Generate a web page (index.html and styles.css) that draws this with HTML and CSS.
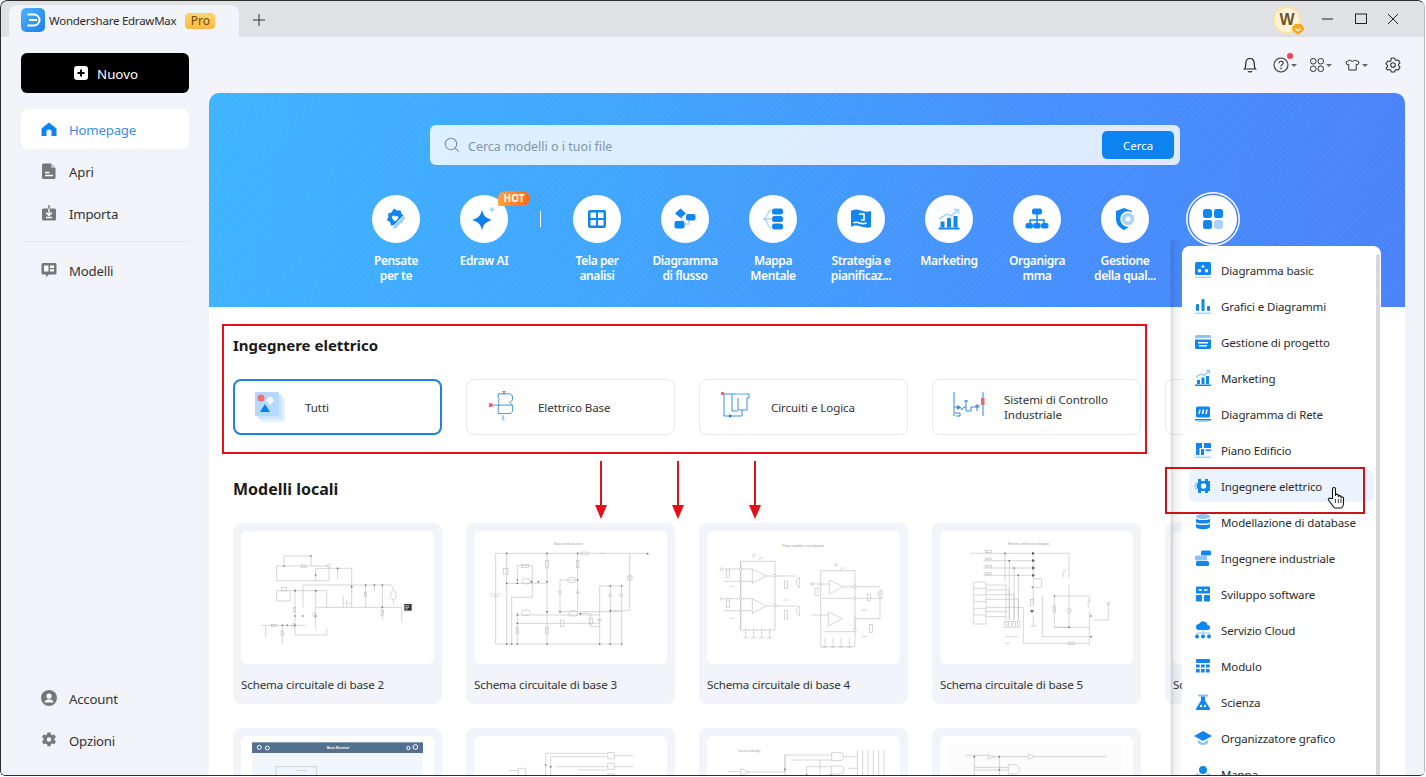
FILE: index.html
```html
<!DOCTYPE html>
<html lang="it">
<head>
<meta charset="utf-8">
<title>Wondershare EdrawMax</title>
<link rel="stylesheet" href="styles.css">
</head>
<body>
<div class="app">
  <header class="titlebar">
    <div class="tab">
      <svg class="logo" viewBox="0 0 24 24"><defs><linearGradient id="lg" x1="0" y1="0" x2="1" y2="1"><stop offset="0" stop-color="#4db4fb"/><stop offset="1" stop-color="#1d7ff0"/></linearGradient></defs><rect width="24" height="24" rx="5" fill="url(#lg)"/><path d="M6.500 6.500h6.500a5.500 5.500 0 0 1 0 11H6.500M8 12h8" fill="none" stroke="#fff" stroke-width="2"/></svg>
      <span class="tab-title">Wondershare EdrawMax</span>
      <span class="pro">Pro</span>
    </div>
    <svg class="newtab" viewBox="0 0 12 12"><path d="M6 0v12M0 6h12" stroke="#333" fill="none"/></svg>
    <div class="title-right">
      <div class="avatar"><span class="avatar-w">W</span><svg class="avatar-badge" viewBox="0 0 12 12"><path d="M3 1h6l3 3.500V7l-6 5-6-5V4.500z" fill="#f6a91f"/><path d="M3.500 5.500 6 8l2.500-2.500" fill="none" stroke="#fff" stroke-width="1.200"/></svg></div>
      <svg class="winbtn win-min" viewBox="0 0 12 12"><path d="M0 6h11" stroke="#222" fill="none"/></svg>
      <svg class="winbtn win-max" viewBox="0 0 12 12"><rect x=".5" y="1" width="11" height="9.500" stroke="#222" fill="none"/></svg>
      <svg class="winbtn win-close" viewBox="0 0 12 12"><path d="M1 1l10 10M11 1 1 11" stroke="#222" fill="none"/></svg>
    </div>
  </header>

  <div class="body">
    <aside class="sidebar">
      <button class="nuovo"><svg class="nuovo-ic" viewBox="0 0 14 14"><rect width="14" height="14" rx="3" fill="#fff"/><path d="M7 3.500v7M3.500 7h7" stroke="#000" stroke-width="2"/></svg>Nuovo</button>
      <nav class="nav nav-top">
        <a class="nav-item active"><svg class="nav-ic" viewBox="0 0 16 16"><path d="M8 1.500 15.500 7.500V15H10.500V11a2.500 2.500 0 0 0-5 0v4H.5V7.500z" fill="#0f84f5"/></svg>Homepage</a>
        <a class="nav-item"><svg class="nav-ic" viewBox="0 0 16 16"><path d="M2.500 .5H10l4.500 4.500v9.500a1.500 1.500 0 0 1-1.500 1.500H2.500A1.500 1.500 0 0 1 1 14.500V2A1.500 1.500 0 0 1 2.500 .5z" fill="#77777b"/><path d="M10 .5V5h4.500z" fill="#bbb"/><path d="M4 9.500h4.500M4 12.500h8" stroke="#fff" stroke-width="1.300"/></svg>Apri</a>
        <a class="nav-item"><svg class="nav-ic" viewBox="0 0 16 16"><path d="M2.500 3.500H13.500A1.500 1.500 0 0 1 15 5v9a1.500 1.500 0 0 1-1.500 1.500h-11A1.500 1.500 0 0 1 1 14V5A1.500 1.500 0 0 1 2.500 3.500z" fill="#77777b"/><path d="M8 3.500v6.500M5 7.500 8 10.500l3-3M5 12.500h6" fill="none" stroke="#fff" stroke-width="1.400"/><path d="M8 0v3.500" stroke="#77777b" stroke-width="1.400"/></svg>Importa</a>
      </nav>
      <hr class="nav-rule">
      <nav class="nav">
        <a class="nav-item"><svg class="nav-ic" viewBox="0 0 16 16"><path d="M2 1h12a1.500 1.500 0 0 1 1.500 1.500V11A1.500 1.500 0 0 1 14 12.500H8L5 15v-2.500H2A1.500 1.500 0 0 1 .5 11V2.500A1.500 1.500 0 0 1 2 1z" fill="#77777b"/><path d="M3 3.500h4.500v6H3zM9 3.500h4v2.500H9zM9 7.300h4v2.200H9z" fill="#fff"/></svg>Modelli</a>
      </nav>
      <nav class="nav nav-bottom">
        <a class="nav-item"><svg class="nav-ic" viewBox="0 0 16 16"><circle cx="8" cy="8" r="8" fill="#77777b"/><circle cx="8" cy="6" r="2.600" fill="#fff"/><path d="M3.500 12.500c.5-2.500 2.500-3.200 4.500-3.200s4 .7 4.500 3.200z" fill="#fff"/></svg>Account</a>
        <a class="nav-item"><svg class="nav-ic" viewBox="0 0 16 16"><path d="M6.500.5h3l.4 2 1.500.8 2-.7 1.500 2.600-1.500 1.300v1.800l1.500 1.300-1.500 2.600-2-.7-1.500.8-.4 2h-3l-.4-2-1.500-.8-2 .7L1 9.600l1.500-1.300V6.500L1 5.200l1.500-2.600 2 .7 1.500-.8z" fill="#77777b"/><circle cx="8" cy="7.500" r="2.300" fill="#f2f4fa"/></svg>Opzioni</a>
      </nav>
    </aside>

    <main class="main">
      <div class="toolbar">
        <svg class="tool tool-bell" viewBox="0 0 14 16"><path d="M1.500 12c1-1 1.300-2 1.300-5.500C2.800 3.500 4.500 1.500 7 1.500s4.200 2 4.200 5c0 3.500.3 4.500 1.300 5.500zM5 14.200c.6 1 3.400 1 4 0" fill="none" stroke="#222" stroke-width="1.200"/></svg>
        <span class="tool-help"><svg class="tool tool-q" viewBox="0 0 16 16"><circle cx="8" cy="8" r="7" fill="none" stroke="#333" stroke-width="1.100"/><path d="M6 6.200c0-2.600 4.200-2.600 4.200-.1 0 1.500-2.200 1.700-2.200 3.300" fill="none" stroke="#333" stroke-width="1.100"/><circle cx="8" cy="11.500" r=".8" fill="#333"/></svg><i class="red-dot"></i><i class="caret"></i></span>
        <span class="tool-group"><svg class="tool tool-apps" viewBox="0 0 14 14"><g fill="none" stroke="#333" stroke-width="1"><rect x=".5" y=".5" width="5.500" height="5.500" rx="2.500"/><rect x="8" y=".5" width="5.500" height="5.500" rx="2.500"/><rect x=".5" y="8" width="5.500" height="5.500" rx="2.500"/><rect x="8" y="8" width="5.500" height="5.500" rx="2.500"/></g></svg><i class="caret"></i></span>
        <span class="tool-group tool-shirt-g"><svg class="tool tool-shirt" viewBox="0 0 18 14"><path d="M6 1 1 3.500l1.500 3.200L4.500 6v7h9V6l2 .7L17 3.500 12 1c-.5 2-5.500 2-6 0z" fill="none" stroke="#333" stroke-width="1.200" stroke-linejoin="round"/></svg><i class="caret"></i></span>
        <svg class="tool tool-gear" viewBox="0 0 16 16"><path d="M6.300 1h3.400l.4 1.800 1.400.8 1.800-.6 1.700 2.900-1.400 1.200v1.800l1.400 1.200-1.700 2.900-1.800-.6-1.400.8-.4 1.800H6.300l-.4-1.800-1.400-.8-1.800.6L1 11.100l1.400-1.200V8.100L1 6.900l1.700-2.900 1.800.6 1.400-.8z" fill="none" stroke="#333" stroke-width="1.100" stroke-linejoin="round"/><circle cx="8" cy="8" r="2.300" fill="none" stroke="#333" stroke-width="1.100"/></svg>
      </div>

      <section class="hero">
        <div class="search">
          <svg class="search-ic" viewBox="0 0 16 16"><circle cx="7" cy="7" r="5.700" fill="none" stroke="#7f8fa3" stroke-width="1.100"/><path d="m11.200 11.200 3.500 3.500" stroke="#7f8fa3" stroke-width="1.100"/></svg>
          <span class="search-ph">Cerca modelli o i tuoi file</span>
          <button class="search-btn">Cerca</button>
        </div>
        <div class="cats">
          <div class="cat"><span class="cat-circle"><svg class="cat-ic" viewBox="0 0 24 24"><path d="M10 1.500l3 2 3.500-.3.800 3.400 2.700 2.200-1.500 3.200.5 3.500-3.400 1-2 2.900-3.200-1.400-3.400.4-1-3.400L2.800 13l1.600-3.100L4 6.400l3.400-.9z" fill="#1185f0"/><path d="M8 9.500c1-1.500 3-1 3.200.3.600-1.300 3-1.200 3 .6 0 1.600-2 3-3.300 3.800C9.700 13.400 7.500 11.500 8 9.500z" fill="#fff"/><path d="M19.500 8.500 22 11 12 21.500l-3.500 1 1-3.500z" fill="#a6c9f3" stroke="#fff" stroke-width=".8"/></svg></span><span class="cat-label">Pensate<br>per te</span></div>
          <div class="cat cat-ai"><span class="cat-circle"><svg class="cat-ic cat-ic-lg" viewBox="0 0 26 26"><path d="M11 3.500c1.200 6 3.500 8.500 10 10.500-6.500 2-8.800 4.500-10 10.500-1.200-6-3.500-8.500-10-10.500 6.500-2 8.800-4.500 10-10.500z" fill="#0f7ff0"/><path d="M21 0c.4 2 1.200 3 3.500 3.500C22.200 4 21.400 5 21 7c-.4-2-1.200-3-3.500-3.500C19.800 3 20.600 2 21 0z" fill="#a9d3fb"/></svg></span><span class="hot">HOT</span><span class="cat-label">Edraw AI</span></div>
          <i class="cat-sep"></i>
          <div class="cat"><span class="cat-circle"><svg class="cat-ic" viewBox="0 0 24 24"><rect x="3" y="3" width="18" height="18" rx="2" fill="#1185f0"/><path d="M5.500 5.500h5.500v5.500H5.500zM13 5.500h5.500v5.500H13zM5.500 13H11v5.500H5.500zM13 13h5.500v5.500H13z" fill="#fff"/></svg></span><span class="cat-label">Tela per<br>analisi</span></div>
          <div class="cat"><span class="cat-circle"><svg class="cat-ic" viewBox="0 0 24 24"><path d="M16 13v4h-5M9 8v6" fill="none" stroke="#a9d3fb" stroke-width="1.500"/><path d="M7.500 1.500 13 6.500 7.500 11 2 6.500z" fill="#1185f0"/><rect x="1.500" y="14" width="10" height="7.500" rx="2" fill="#1185f0"/><rect x="13" y="7" width="9.500" height="6.500" rx="2" fill="#1185f0"/></svg></span><span class="cat-label">Diagramma<br>di flusso</span></div>
          <div class="cat"><span class="cat-circle"><svg class="cat-ic" viewBox="0 0 24 24"><path d="M10 3C6 3 7 12 2 12c5 0 4 9 8 9M3 12h7" fill="none" stroke="#a9d3fb" stroke-width="1.300"/><rect x="11" y="1.500" width="11" height="6" rx="2.500" fill="#1185f0"/><rect x="11" y="9" width="11" height="6" rx="2.500" fill="#1185f0"/><rect x="11" y="16.500" width="11" height="6" rx="2.500" fill="#1185f0"/></svg></span><span class="cat-label">Mappa<br>Mentale</span></div>
          <div class="cat"><span class="cat-circle"><svg class="cat-ic" viewBox="0 0 24 24"><path d="M2 4c3-2 6-2 10-.5 4 1.500 7 1.500 10 .5v16c-3 1-6 1-10-.5-4-1.500-7-1.500-10 .5z" fill="#1185f0"/><path d="M10 7h5v6h-3M4.500 16c2-1.500 4-.8 6 0s4 1 7 0" fill="none" stroke="#fff" stroke-width="1.600"/></svg></span><span class="cat-label">Strategia e<br>pianificaz...</span></div>
          <div class="cat"><span class="cat-circle"><svg class="cat-ic" viewBox="0 0 24 24"><path d="M2 12 10 7l4 2 7-6M17 2.500h4.500V7" fill="none" stroke="#a9d3fb" stroke-width="1.500"/><rect x="3.500" y="14.500" width="4" height="6" fill="#1185f0"/><rect x="10" y="11" width="4" height="9.500" fill="#1185f0"/><rect x="16.500" y="9" width="4" height="11.500" fill="#1185f0"/><rect x="1.500" y="20.500" width="21" height="2" fill="#1185f0"/></svg></span><span class="cat-label">Marketing</span></div>
          <div class="cat"><span class="cat-circle"><svg class="cat-ic" viewBox="0 0 24 24"><path d="M12 7v5M5 16v-3h14v3M12 12v4" fill="none" stroke="#1185f0" stroke-width="1.500"/><rect x="7" y="1.500" width="10" height="6" rx="2" fill="#1185f0"/><rect x=".5" y="16" width="7.500" height="5.500" rx="2" fill="#1185f0"/><rect x="8.200" y="16" width="7.500" height="5.500" rx="2" fill="#1185f0"/><rect x="16" y="16" width="7.500" height="5.500" rx="2" fill="#1185f0"/></svg></span><span class="cat-label">Organigra<br>mma</span></div>
          <div class="cat"><span class="cat-circle"><svg class="cat-ic" viewBox="0 0 24 24"><path d="M3 4 11 1l8 3v8c0 6-4 9-8 11-4-2-8-5-8-11z" fill="#1185f0"/><circle cx="15" cy="12" r="7" fill="#a9d3fb" stroke="#fff" stroke-width="1.500"/><circle cx="15" cy="12" r="2.500" fill="#fff"/></svg></span><span class="cat-label">Gestione<br>della qual...</span></div>
          <div class="cat cat-sel"><span class="cat-circle"><svg class="cat-ic" viewBox="0 0 24 24"><rect x="2" y="2" width="9" height="9" rx="2.500" fill="#1185f0"/><rect x="13" y="2" width="9" height="9" rx="2.500" fill="#1185f0"/><rect x="2" y="13" width="9" height="9" rx="2.500" fill="#1185f0"/><rect x="13" y="13" width="9" height="9" rx="2.500" fill="#a9d3fb"/></svg></span></div>
        </div>
      </section>

      <section class="content">
        <h2 class="h-first">Ingegnere elettrico</h2>
        <div class="subcats">
          <div class="sub sub-on"><svg class="sub-ic" viewBox="0 0 32 32"><rect x="7" y="7" width="24" height="24" rx="1" fill="#e3f0fd"/><rect x="4" y="4" width="24" height="24" rx="1" fill="#cfe5fb"/><rect x="1" y="1" width="24" height="24" rx="1" fill="#b5d8fb"/><circle cx="7" cy="7" r="3.500" fill="#f0716e"/><path d="m16 5 4.500 4.500-4.500 4.500-4.500-4.500z" fill="#eef6fe"/><path d="m11 13 5 8H6z" fill="#0f7ff0"/></svg><span>Tutti</span></div>
          <div class="sub"><svg class="sub-ic" viewBox="0 0 32 34"><g fill="none" stroke="#3f8fe0" stroke-width="1"><path d="M11 3h12l3 2v5l-3 2 3 3v7l-2 2H11V15l1-1.500-1-1.500 1-3-1-2z"/><path d="M5 15h21M17 2v2M16 26v5"/></g><path d="M15 0h4l-2 3z" fill="#e86a70"/><rect x="1" y="13" width="4" height="4" fill="#e86a70"/><path d="M14 30h5l-2.500 2z" fill="#a9d3fb"/></svg><span>Elettrico Base</span></div>
          <div class="sub"><svg class="sub-ic" viewBox="0 0 32 32"><g fill="none" stroke="#3f8fe0" stroke-width="1"><path d="M4 3h25v4h-2v12H18v-12"/><path d="M4 3v22h18V19"/><path d="M12 3v17h6M10 25h2"/></g><rect x="1" y="1" width="3" height="3" fill="#e86a70"/><path d="m9 23 3 2-3 2z" fill="#1f7fe0"/><path d="M16 2h10v2H16z" fill="#a9d3fb"/></svg><span>Circuiti e Logica</span></div>
          <div class="sub"><svg class="sub-ic" viewBox="0 0 32 32"><g fill="none" stroke="#2f86e0" stroke-width="1"><path d="M1 1v24M30 1v24M1 16h6l2 3 2-3h2v4h5v-4h8"/><path d="M13 9v7M11 10h4M24 13v7M22 15h5M2 22h5v3H3"/></g><rect x="28" y="7" width="3.500" height="7" fill="#e86a70"/><path d="M4 14v5l4-2.500z" fill="#2f86e0"/></svg><span>Sistemi di Controllo<br>Industriale</span></div>
          <div class="sub"></div>
        </div>

        <h2 class="h-second">Modelli locali</h2>
        <div class="tpls">
          <article class="tpl"><div class="thumb"><svg viewBox="48 33 579 399" class="diag"><g class="w"><path d="M177 108H258V138M177 108V138M155 138H312M155 138V182H312V145M272 145H380V195M272 145V182M234 262V195H500M155 212H305V262M155 212V243H195V212M210 212V345H305V325M272 212V328M380 195V262M422 195V262M448 195V215M472 195V300M275 262H530V305M110 316H240M172 316V375M122 316V352M338 145V178M365 240V262M355 228V262"/><rect x="170" y="202" width="14" height="11"/><rect x="205" y="262" width="7" height="14"/><rect x="229" y="135" width="14" height="7"/><rect x="168" y="333" width="7" height="14"/><rect x="418" y="216" width="7" height="14"/><rect x="468" y="272" width="7" height="14"/><rect x="140" y="313" width="14" height="6"/><path d="M305 137l7-6 7 6-7 7zM260 284l10 8v-16zM198 316l10 8v-16zM366 250h14"/><ellipse cx="505" cy="225" rx="8" ry="14"/><path d="M500 197 505 211M505 239V255"/></g><g class="d"><circle cx="258" cy="108" r="2.500"/><circle cx="177" cy="138" r="2.500"/><circle cx="272" cy="165" r="2.500"/><circle cx="210" cy="212" r="2.500"/><circle cx="272" cy="212" r="2.500"/><circle cx="380" cy="200" r="2.500"/><circle cx="422" cy="195" r="2.500"/><circle cx="448" cy="195" r="2.500"/><circle cx="472" cy="195" r="2.500"/><circle cx="472" cy="262" r="2.500"/><circle cx="210" cy="288" r="2.500"/><circle cx="234" cy="288" r="2.500"/><circle cx="272" cy="288" r="2.500"/><circle cx="172" cy="316" r="2.500"/><circle cx="187" cy="316" r="2.500"/><circle cx="210" cy="316" r="2.500"/><circle cx="338" cy="145" r="2.500"/></g><rect x="538" y="252" width="22" height="20" fill="#333"/><path d="M541 257h12M541 262h12M541 267h8" stroke="#fff" stroke-width="2"/></svg></div><p class="tpl-name">Schema circuitale di base 2</p></article>

          <article class="tpl"><div class="thumb"><svg viewBox="747 33 579 399" class="diag"><text x="1030" y="76" class="dt">Basic overload circuit</text><g class="w"><path d="M812 100H1268M812 100V372H1190M845 100V372M860 230V372M860 232H922V137H877V190M845 190H965M966 100V372M1058 100V270M1005 180V275H1190M877 275V372M877 285H1125M877 310H1125M1005 180H1055M1124 198V372M1124 198H1190V372M1156 198V372M1156 272H1214V100M1097 280V320H1124M1066 280H1097"/><rect x="835" y="146" width="14" height="16"/><rect x="890" y="134" width="20" height="8"/><rect x="962" y="122" width="8" height="22"/><rect x="1054" y="122" width="8" height="20"/><rect x="1068" y="96" width="24" height="9" rx="4"/><rect x="892" y="176" width="24" height="16" rx="7"/><rect x="1028" y="172" width="24" height="16" rx="7"/><rect x="890" y="270" width="26" height="16" rx="7"/><rect x="1032" y="272" width="26" height="16" rx="7"/><rect x="1006" y="300" width="11" height="20"/><rect x="1092" y="294" width="10" height="18"/><rect x="962" y="322" width="8" height="18"/><rect x="873" y="322" width="8" height="18"/><circle cx="1214" cy="174" r="8"/><path d="M1209 169l10 10M1219 169l-10 10M795 222h34M802 229h20M1128 100h10M1000 215h10l-5 8zM1053 220h10l-5-8zM1150 228h12l-6-8zM1182 228h12l-6-8zM1118 298h12l-6 8z"/></g><g class="d"><circle cx="845" cy="100" r="2.500"/><circle cx="966" cy="100" r="2.500"/><circle cx="1058" cy="100" r="2.500"/><circle cx="1268" cy="101" r="2.500"/><circle cx="877" cy="180" r="2.500"/><circle cx="877" cy="190" r="2.500"/><circle cx="845" cy="190" r="2.500"/><circle cx="920" cy="185" r="2.500"/><circle cx="940" cy="185" r="2.500"/><circle cx="966" cy="185" r="2.500"/><circle cx="966" cy="275" r="2.500"/><circle cx="1005" cy="275" r="2.500"/><circle cx="1058" cy="180" r="2.500"/><circle cx="1156" cy="198" r="2.500"/><circle cx="1190" cy="198" r="2.500"/><circle cx="1156" cy="272" r="2.500"/><circle cx="877" cy="285" r="2.500"/><circle cx="877" cy="310" r="2.500"/><circle cx="1066" cy="281" r="2.500"/><circle cx="845" cy="372" r="2.500"/><circle cx="860" cy="372" r="2.500"/><circle cx="877" cy="372" r="2.500"/><circle cx="966" cy="372" r="2.500"/><circle cx="1124" cy="372" r="2.500"/><circle cx="1156" cy="372" r="2.500"/><circle cx="1190" cy="372" r="2.500"/></g></svg></div><p class="tpl-name">Schema circuitale di base 3</p></article>

          <article class="tpl"><div class="thumb"><svg viewBox="51 33 579 399" class="diag"><text x="340" y="80" class="dt">Power amplifier circuit diagram</text><g class="w"><path d="M187 147V190L228 168zM187 236V280L228 258zM418 180V222L460 200zM415 276V318L458 296z"/><path d="M152 124H255V330H152zM152 124V330M100 147H187M100 184H187M100 236H187M100 272H187M228 168H320M228 258H320M392 152H495V380H392zM365 192H418M365 285H415M395 235H495M400 335H495V296M460 200H570M495 235H572M495 296H570V210"/><circle cx="94" cy="147" r="4"/><circle cx="94" cy="236" r="4"/><circle cx="366" cy="192" r="4"/><circle cx="191" cy="106" r="4"/><circle cx="438" cy="135" r="4"/><rect x="110" y="150" width="8" height="22"/><rect x="110" y="240" width="8" height="22"/><rect x="284" y="183" width="9" height="22"/><rect x="284" y="272" width="9" height="25"/><rect x="375" y="204" width="9" height="22"/><rect x="532" y="222" width="9" height="20"/><rect x="538" y="314" width="9" height="24"/><path d="M320 180l8-8v32l-8-8zM320 266l8-8v30l-8-8zM564 218l12-8v26l-12-8zM167 325v28M191 325v28M215 325v28M239 325v28M405 355v25M429 355v25M453 355v25M478 355v25M160 353h14M184 353h14M208 353h14M232 353h14M398 382h14M422 382h14M446 382h14M471 382h14M118 200h12M118 295h12M280 240h16M515 270h16M515 350h16M205 120c5-8 8-8 15-4M450 150c5-8 8-8 15-4"/></g><g class="d light"><circle cx="152" cy="147" r="4"/><circle cx="152" cy="184" r="4"/><circle cx="152" cy="236" r="4"/><circle cx="152" cy="272" r="4"/><circle cx="255" cy="167" r="4"/><circle cx="255" cy="256" r="4"/><circle cx="392" cy="192" r="4"/><circle cx="495" cy="200" r="4"/><circle cx="495" cy="235" r="4"/><circle cx="495" cy="296" r="4"/><circle cx="495" cy="332" r="4"/></g></svg></div><p class="tpl-name">Schema circuitale di base 4</p></article>

          <article class="tpl"><div class="thumb"><svg viewBox="750 33 579 399" class="diag"><text x="1016" y="74" class="dt">Remote control circuit diagram</text><g class="w"><path d="M840 100H1030M880 122H1030M880 144H1030M880 166H1030M1040 100H1137V175M1030 100V202M1030 176H1055V202H1030M1137 195V322H1093V228H1198V245M1198 275V375M1093 322H1198M1030 202V252M1030 285V318M1020 318h20M851 186H888V312H851zM888 195H948V300M888 210H958V300M888 224H972V300M888 238H985V300M888 262H1000V370H1198M888 275H950M888 290H950M945 100V185M958 122V300M972 144V300M985 166V300M1057 350H1198M1057 228V350M1210 300H1255V250M945 350h40M945 370h15"/><rect x="886" y="92" width="18" height="5"/><rect x="886" y="114" width="18" height="5"/><rect x="886" y="136" width="18" height="5"/><rect x="886" y="158" width="18" height="5"/><rect x="943" y="305" width="8" height="18"/><rect x="956" y="305" width="8" height="18"/><rect x="969" y="305" width="8" height="18"/><rect x="982" y="305" width="8" height="18"/><rect x="1089" y="258" width="8" height="18"/><rect x="1021" y="238" width="9" height="18"/><rect x="1136" y="366" width="18" height="7"/><ellipse cx="1137" cy="272" rx="7" ry="6"/><path d="M1120 148c8 2 8 6 0 8s8 6 0 8 8 6 0 8M1195 240c8 2 8 6 0 8s8 6 0 8 8 6 0 8M1250 248h10l-5 8zM852 205h36M852 225h36M852 245h36M852 265h36M852 285h36"/></g><g class="d"><path d="M1026 95l10 5-10 5zM1026 117l10 5-10 5zM1026 139l10 5-10 5zM1026 161l10 5-10 5zM1020 270h12l-6 10z"/><circle cx="945" cy="100" r="2.500"/><circle cx="958" cy="122" r="2.500"/><circle cx="972" cy="144" r="2.500"/><circle cx="985" cy="166" r="2.500"/><circle cx="1027" cy="202" r="2.500"/><circle cx="1093" cy="228" r="2.500"/><circle cx="1137" cy="322" r="2.500"/><circle cx="1203" cy="350" r="2.500"/><circle cx="1203" cy="288" r="2.500"/></g></svg></div><p class="tpl-name">Schema circuitale di base 5</p></article>

          <article class="tpl"><div class="thumb"></div><p class="tpl-name">Schema circuitale di base 6</p></article>

          <article class="tpl"><div class="thumb"><svg viewBox="48 648 579 399" class="diag"><rect x="81" y="667" width="513" height="32" fill="#54708f"/><rect x="81" y="699" width="513" height="120" fill="#f1f6fb"/><text x="339" y="687" class="dt dt-w">Basic Electrical</text><g fill="none" stroke="#fff" stroke-width="3"><circle cx="103" cy="682" r="6"/><circle cx="127" cy="684" r="6"/><circle cx="550" cy="684" r="5"/><circle cx="571" cy="681" r="7"/></g><g class="w"><path d="M153 740H275V770M153 740V775M215 752h30"/></g></svg></div></article>

          <article class="tpl"><div class="thumb"><svg viewBox="747 648 579 399" class="diag"><g class="w"><path d="M962 700V775M962 700H1145M977 710H1145M977 710V775M992 740H1145M1060 750H1145M1168 707H1225M1168 740H1225M1148 698h20v18h-20zM1148 730h20v18h-20zM1148 762h20v18h-20zM880 745h22v22h-22zM850 752h30"/></g><g class="d"><circle cx="962" cy="735" r="2.500"/><circle cx="977" cy="740" r="2.500"/></g></svg></div></article>

          <article class="tpl"><div class="thumb"><svg viewBox="51 648 579 399" class="diag"><text x="178" y="695" class="dt">Circuits and logic</text><g class="w"><path d="M152 745v22l24-11zM115 755h37M176 756H285V705H425M285 705V770M305 720H425M350 740H425M350 740V770M390 720V770M425 698h25a12 12 0 0 1 0 24h-25zM425 738h25a12 12 0 0 1 0 24h-25zM462 710h40M475 745h30M502 690v90M518 690v90M534 690v90M550 690v90M566 690v90M582 690v90"/></g><g class="d"><circle cx="285" cy="748" r="2.500"/><circle cx="350" cy="765" r="2.500"/><circle cx="422" cy="765" r="2.500"/></g></svg></div></article>

          <article class="tpl"><div class="thumb"><svg viewBox="750 648 579 399" class="diag"><rect x="780" y="668" width="515" height="120" fill="#fcfcfc"/><g class="w"><path d="M825 706H895L915 710 895 717V702M915 710H1015M1015 702l22 8-22 8zM1037 710H1250M853 710V780M853 742H955M853 750H955M928 710V770M955 734h20a14 14 0 0 1 0 28h-20z"/></g><g class="d"><circle cx="853" cy="710" r="2.500"/><circle cx="928" cy="710" r="2.500"/><circle cx="928" cy="750" r="2.500"/></g></svg></div></article>
        </div>
      </section>
    </main>
  </div>

  <div class="menu">
    <div class="menu-bar"></div>
    <div class="menu-item"><svg viewBox="0 0 18 18"><rect x="1" y="1" width="16" height="13" rx="1.500" fill="#1185f0"/><path d="M9 3.500l2 3H7z M5.500 8a1.700 1.700 0 1 0 .01 0zM12.500 8a1.700 1.700 0 1 0 .01 0z" fill="#fff"/><rect x="1" y="15.500" width="16" height="1.500" fill="#a9d3fb"/></svg>Diagramma basic</div>
    <div class="menu-item"><svg viewBox="0 0 18 18"><rect x="2" y="7" width="3" height="7" rx="1" fill="#1185f0"/><rect x="7.500" y="2" width="3" height="12" rx="1" fill="#1185f0"/><rect x="13" y="9" width="3" height="5" rx="1" fill="#1185f0"/><rect x="1" y="15.500" width="16" height="1.500" fill="#a9d3fb"/></svg>Grafici e Diagrammi</div>
    <div class="menu-item"><svg viewBox="0 0 18 18"><path d="M2.500 2h13A1.500 1.500 0 0 1 17 3.500V5H1V3.500A1.500 1.500 0 0 1 2.500 2z" fill="#8cc4fa"/><path d="M1 6.500h16v8a1.500 1.500 0 0 1-1.500 1.500h-13A1.500 1.500 0 0 1 1 14.500z" fill="#1185f0"/><rect x="4" y="9" width="10" height="1.500" fill="#fff"/><rect x="5" y="12" width="8" height="1.500" fill="#fff"/></svg>Gestione di progetto</div>
    <div class="menu-item"><svg viewBox="0 0 18 18"><path d="M2 8 7 5l3 1.500L15 2M12 1.500h3.500V5" fill="none" stroke="#8cc4fa" stroke-width="1.200"/><rect x="3" y="11" width="3" height="4" fill="#1185f0"/><rect x="7.500" y="8.500" width="3" height="6.500" fill="#1185f0"/><rect x="12" y="7" width="3" height="8" fill="#1185f0"/><rect x="1" y="15.500" width="16" height="1.500" fill="#1185f0"/></svg>Marketing</div>
    <div class="menu-item"><svg viewBox="0 0 18 18"><rect x="2" y="1.500" width="14" height="11" rx="1.500" fill="#1185f0"/><path d="M6 4.500 5 9M9.500 4.500 8.500 9M13 4.500 12 9" stroke="#fff" stroke-width="1.500"/><rect x="1" y="14" width="16" height="1.500" fill="#1185f0"/><rect x="4" y="16" width="10" height="1" fill="#a9d3fb"/></svg>Diagramma di Rete</div>
    <div class="menu-item"><svg viewBox="0 0 18 18"><path d="M2 2h6v5H5.500v7H2z" fill="#1185f0"/><path d="M7 8h3v6H7z" fill="#1185f0"/><rect x="10" y="2" width="7" height="5" rx=".5" fill="#1185f0"/><rect x="11.500" y="8.500" width="5.500" height="1.500" fill="#1185f0"/><rect x="1" y="15.500" width="16" height="1.500" fill="#a9d3fb"/></svg>Piano Edificio</div>
    <div class="menu-item menu-on"><svg viewBox="0 0 18 18"><path d="M4 2h3v2h4V2h3v2h2v10h-2v2h-3v-2H7v2H4v-4.500H3v-5h1z" fill="#1185f0"/><circle cx="9.500" cy="9" r="2.700" fill="#fff"/><path d="M0 9h3M1 6.500h2M1 11.500h2" stroke="#8cc4fa" stroke-width="1.300"/></svg>Ingegnere elettrico</div>
    <div class="menu-item"><svg viewBox="0 0 18 18"><ellipse cx="9" cy="3.500" rx="7" ry="2.500" fill="#8cc4fa"/><path d="M2 5.500c1 2 13 2 14 0V9c-1 2-13 2-14 0zM2 10.500c1 2 13 2 14 0V14c-1 3-13 3-14 0z" fill="#1185f0"/></svg>Modellazione di database</div>
    <div class="menu-item"><svg viewBox="0 0 18 18"><rect x="7" y="1.500" width="10" height="5" rx="1.500" fill="#1185f0"/><rect x="1" y="6.500" width="12" height="5" rx="1.500" fill="#8cc4fa"/><rect x="2" y="12" width="13" height="5" rx="1.500" fill="#1185f0"/></svg>Ingegnere industriale</div>
    <div class="menu-item"><svg viewBox="0 0 18 18"><rect x="2" y="1.500" width="14" height="7" rx="1" fill="#1185f0"/><path d="M4.500 5h3.500M10 5h3.500" stroke="#fff" stroke-width="1.300"/><rect x="2" y="10" width="6" height="6.500" rx="1" fill="#1185f0"/><rect x="10" y="10" width="6" height="6.500" rx="1" fill="#1185f0"/></svg>Sviluppo software</div>
    <div class="menu-item"><svg viewBox="0 0 18 18"><path d="M5 9a3 3 0 0 1 0-6 4.500 4.500 0 0 1 8.500 1A2.500 2.500 0 0 1 13.500 9z" fill="#1185f0"/><path d="M9 9v3M3 14v-2h12v2M9 12v2" fill="none" stroke="#8cc4fa" stroke-width="1"/><circle cx="3" cy="15.500" r="2" fill="#1185f0"/><circle cx="9" cy="15.500" r="2" fill="#1185f0"/><circle cx="15" cy="15.500" r="2" fill="#1185f0"/></svg>Servizio Cloud</div>
    <div class="menu-item"><svg viewBox="0 0 18 18"><rect x="2" y="2" width="14" height="4" rx="1" fill="#1185f0"/><g fill="#1185f0"><rect x="2" y="7.500" width="3.700" height="3"/><rect x="7" y="7.500" width="3.700" height="3"/><rect x="12" y="7.500" width="3.700" height="3"/><rect x="2" y="12" width="3.700" height="3.500"/><rect x="7" y="12" width="3.700" height="3.500"/><rect x="12" y="12" width="3.700" height="3.500"/></g></svg>Modulo</div>
    <div class="menu-item"><svg viewBox="0 0 18 18"><rect x="4" y="1.500" width="10" height="2" fill="#8cc4fa"/><path d="M7 3.500h4v4l5 8a1 1 0 0 1-1 1.500H3a1 1 0 0 1-1-1.500l5-8z" fill="#1185f0"/><circle cx="7" cy="13" r="1.200" fill="#fff"/><circle cx="11" cy="13" r="1.200" fill="#fff"/></svg>Scienza</div>
    <div class="menu-item"><svg viewBox="0 0 18 18"><path d="M9 2 18 7 9 12 0 7z" fill="#1185f0"/><path d="M4 11v3c2 2.500 8 2.500 10 0v-3L9 14z" fill="#8cc4fa"/></svg>Organizzatore grafico</div>
    <div class="menu-item"><svg viewBox="0 0 18 18"><circle cx="9" cy="5" r="4" fill="#1185f0"/><circle cx="3.500" cy="11" r="2.500" fill="#8cc4fa"/><circle cx="14.500" cy="11" r="2.500" fill="#8cc4fa"/><path d="M1 16h16v2H1z" fill="#1185f0"/></svg>Mappa</div>
  </div>

  <div class="note-box note-box-cat"></div>
  <div class="note-box note-box-menu"></div>
  <svg class="note-arrow note-a1" viewBox="0 0 14 58"><path d="M7 0v46" stroke="#e2121a" stroke-width="2"/><path d="M1 44h12L7 58z" fill="#e2121a"/></svg>
  <svg class="note-arrow note-a2" viewBox="0 0 14 58"><path d="M7 0v46" stroke="#e2121a" stroke-width="2"/><path d="M1 44h12L7 58z" fill="#e2121a"/></svg>
  <svg class="note-arrow note-a3" viewBox="0 0 14 58"><path d="M7 0v46" stroke="#e2121a" stroke-width="2"/><path d="M1 44h12L7 58z" fill="#e2121a"/></svg>
  <svg class="hand" viewBox="0 0 18 23"><path d="M5.500 12.500V3a1.500 1.500 0 0 1 3 0v6.500a1.400 1.400 0 0 1 2.800 0v1a1.400 1.400 0 0 1 2.700.3v1a1.300 1.300 0 0 1 2.500.5V17c0 3-1.500 5-3 5H8.500c-1.500 0-2.200-1-3-2.500L1.500 14c-.8-1.300.8-2.600 2-1.500z" fill="#fff" stroke="#111" stroke-width="1.100" stroke-linejoin="round"/><path d="M8.500 13v4M11.300 13v4M14 13v4" stroke="#111" stroke-width=".8"/></svg>
</div>
</body>
</html>
```

FILE: styles.css
```css
* { box-sizing: border-box; }
html, body { margin: 0; padding: 0; background: #fff; overflow: hidden; }
body { font-family: "Noto Sans", "Open Sans", sans-serif; font-size: 12px; color: #222; }

.app { position: relative; width: 1425px; height: 776px; background: #f2f4fa; border-radius: 7px 7px 5px 5px; overflow: hidden; display: flex; flex-direction: column; }
.app::after { content: ""; position: absolute; inset: 0; border: 1px solid #2e2e2e; border-right-color: #bdbdbd; border-radius: inherit; pointer-events: none; }

/* title bar */
.titlebar { flex: 0 0 37px; background: #dfe1e5; display: flex; align-items: flex-end; position: relative; }
.tab { width: 230px; height: 32px; margin-left: 9px; background: #f2f4fa; border-radius: 8px 8px 0 0; display: flex; align-items: center; padding-left: 12px; padding-bottom: 1px; }
.logo { width: 24px; height: 24px; flex: none; margin-top: -2px; }
.tab-title { margin-left: 4px; font-size: 11.500px; color: #2b2b2b; letter-spacing: -.25px; white-space: nowrap; }
.pro { margin-left: 9px; width: 30px; height: 16px; background: linear-gradient(#ffd572, #fbb83f); border-radius: 4px; color: #6b4a10; font-size: 12px; line-height: 16px; text-align: center; }
.newtab { width: 12px; height: 12px; margin: 0 0 11px 14px; }
.title-right { position: absolute; right: 0; top: 0; height: 37px; }
.avatar { position: absolute; top: 6px; width: 28px; height: 28px; right: 124px; border-radius: 50%; background: #fff3da; border: 2px solid #fbe3a6; display: flex; align-items: center; justify-content: center; }
.avatar-w { font-family: "Liberation Sans", sans-serif; font-weight: 700; font-size: 16px; color: #6d5327; }
.avatar-badge { position: absolute; right: -5px; bottom: -3px; width: 12px; height: 12px; }
.winbtn { position: absolute; width: 12px; height: 12px; }
.win-min { right: 91px; top: 13px; }
.win-max { right: 58px; top: 13px; }
.win-close { right: 26px; top: 13px; }

/* body */
.body { flex: 1; display: flex; min-height: 0; }
.sidebar { width: 209px; flex: none; padding: 16px 20px 16px 21px; display: flex; flex-direction: column; }
.nuovo { width: 168px; height: 40px; background: #000; border: 0; border-radius: 6px; color: #fff; font: 13.300px "Noto Sans", sans-serif; display: flex; align-items: center; justify-content: center; gap: 9px; padding: 2px 0 0 2px; }
.nuovo-ic { width: 14px; height: 14px; margin-top: -2px; }
.nav { display: flex; flex-direction: column; gap: 2px; }
.nav-top { margin-top: 16px; }
.nav-item { height: 40px; width: 168px; display: flex; align-items: center; padding: 2px 0 0 21px; font-size: 13.200px; color: #333; border-radius: 8px; letter-spacing: -.2px; }
.nav-ic { width: 16px; height: 16px; margin: -2px 12px 0 -1px; flex: none; }
.nav-item.active { background: #fff; color: #3b8de8; }
.nav-rule { width: 168px; height: 1px; margin: 8px 0; border: 0; background: #e3e5ea; }
.nav-bottom { margin-top: auto; }

/* main */
.main { flex: 0 0 1196px; display: flex; flex-direction: column; min-width: 0; }
.toolbar { flex: 0 0 56px; position: relative; display: flex; align-items: center; }
.tool-bell, .tool-q, .tool-apps, .tool-shirt, .tool-gear { display: block; }
.tool-bell { width: 14px; height: 16px; margin-left: 1034px; }
.tool-help { position: relative; display: flex; align-items: center; margin-left: 16px; }
.tool-q { width: 16px; height: 16px; }
.red-dot { position: absolute; left: 14px; top: -4px; width: 6px; height: 6px; border-radius: 50%; background: #f7424f; }
.caret { width: 0; height: 0; border: 3px solid transparent; border-top: 3.500px solid #666; border-bottom: 0; margin-left: 2px; margin-top: 1px; }
.tool-group { display: flex; align-items: center; margin-left: 13px; }
.tool-apps { width: 14px; height: 14px; }
.tool-shirt-g { margin-left: 13px; }
.tool-shirt { width: 15px; height: 14px; }
.tool-gear { width: 16px; height: 16px; margin-left: 17px; }

.hero { flex: 0 0 214px; width: 1196px; border-radius: 10px 10px 0 0; background: repeating-linear-gradient(-45deg, rgba(255,255,255,.035) 0 1px, transparent 1px 4px), linear-gradient(100deg, #3fb4ff 0%, #41a5fe 35%, #4692fc 65%, #4a82fb 100%); padding-top: 32px; display: flex; flex-direction: column; position: relative; }
.search { width: 750px; height: 40px; margin-left: 221px; background: rgba(255,255,255,.82); border-radius: 6px; display: flex; align-items: center; padding: 0 6px 0 14px; }
.search-ic { width: 16px; height: 16px; }
.search-ph { margin: 2px 0 0 8px; font-size: 12.500px; color: #8494a8; }
.search-btn { margin-left: auto; width: 72px; height: 28px; border: 0; border-radius: 5px; background: #0b84f1; color: #fff; font: 11.500px "Noto Sans", sans-serif; }
.cats { display: flex; margin: 30px 0 0 143px; }
.cat { width: 88px; display: flex; flex-direction: column; align-items: center; position: relative; }
.cat-circle { width: 48px; height: 48px; background: #fff; border-radius: 50%; display: flex; align-items: center; justify-content: center; }
.cat-ic { width: 24px; height: 24px; }
.cat-ic-lg { width: 26px; height: 26px; }
.cat-label { margin-top: 10px; text-align: center; font-size: 12px; line-height: 15px; font-weight: 600; color: #fff; letter-spacing: -.4px; white-space: nowrap; }
.cat-sep { width: 1px; height: 16px; background: #fff; margin: 16px 12px 0; flex: none; }
.hot { position: absolute; left: 58px; top: -4px; width: 32px; height: 15px; border-radius: 8px 8px 8px 2px; background: linear-gradient(90deg, #ffa13c, #ff6a1a); color: #fff; font-size: 10px; font-weight: 700; line-height: 15px; text-align: center; }
.cat-sel .cat-circle { box-shadow: 0 0 0 1.500px #4a82fb, 0 0 0 3px #fff; }

.content { flex: 1; background: #fff; padding: 27px 0 0 24px; overflow: hidden; min-height: 0; }
h2 { margin: 0; font-size: 15px; font-weight: 700; line-height: 22px; color: #1a1a1a; }
.subcats { display: grid; grid-template-columns: repeat(5, 209px); gap: 24px; margin-top: 23px; }
.sub { height: 56px; border: 1px solid #e8e9ee; border-radius: 8px; display: flex; align-items: center; padding-left: 20px; gap: 19px; font-size: 11.600px; line-height: 15px; color: #333; letter-spacing: -.1px; }
.sub-on { border: 2px solid #2181dc; padding-left: 19px; }
.sub-ic { width: 32px; height: 32px; flex: none; }
.h-second { margin-top: 43px; font-size: 16px; }
.tpls { display: grid; grid-template-columns: repeat(5, 209px); grid-auto-rows: 181px; gap: 24px; margin-top: 23px; }
.tpl { background: #f2f4fa; border-radius: 8px; padding: 8px; }
.thumb { height: 133px; background: #fff; border-radius: 6px; overflow: hidden; }
.tpl-name { margin: 13px 0 0; font-size: 11.600px; line-height: 16px; color: #333; letter-spacing: -.13px; white-space: nowrap; }
.diag { display: block; width: 193px; height: 133px; }
.diag .w { fill: none; stroke: #bcbcbc; stroke-width: 1.800; }
.diag .d { fill: #666; }
.diag .d.light { fill: #fff; stroke: #b4b4b4; stroke-width: 1.800; }
.dt { font-size: 9px; font-family: "Liberation Sans", sans-serif; fill: #999; text-anchor: middle; }
.dt-w { fill: #fff; font-weight: 700; }

/* category dropdown */
.menu { position: absolute; left: 1182px; top: 246px; width: 199px; height: 560px; background: #fff; border-radius: 8px; padding: 8px 7px; display: flex; flex-direction: column; gap: 4px; }
.menu::before { content: ""; position: absolute; left: -12px; top: -6px; bottom: 0; width: 12px; background: linear-gradient(90deg, rgba(0,0,0,.02) 0, rgba(0,0,0,.14) 2px, rgba(0,0,0,.06) 4px, rgba(0,0,0,.01) 100%); }
.menu-bar { position: absolute; right: 1px; top: 8px; width: 4px; bottom: 0; background: #d9d9d9; border-radius: 2px; }
.menu-item { height: 32px; width: 185px; flex: none; display: flex; align-items: center; gap: 9px; padding-left: 5px; border-radius: 7px; color: #2b2b2b; font-size: 11.500px; letter-spacing: -.13px; white-space: nowrap; }
.menu-item svg { width: 18px; height: 18px; flex: none; }
.menu-on { background: #ebf4fe; }

/* annotations */
.note-box { position: absolute; border: 2px solid #e2121a; }
.note-box-cat { left: 222px; top: 324px; width: 925px; height: 130px; }
.note-box-menu { left: 1165px; top: 467px; width: 200px; height: 47px; border-color: #c8141a; }
.note-arrow { position: absolute; top: 461px; width: 14px; height: 58px; }
.note-a1 { left: 594px; }
.note-a2 { left: 671px; }
.note-a3 { left: 748px; }
.hand { position: absolute; left: 1327px; top: 486px; width: 18px; height: 23px; }
```
